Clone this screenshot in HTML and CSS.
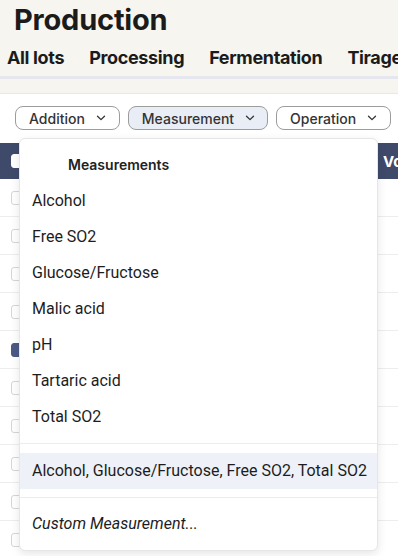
FILE: index.html
```html
<!DOCTYPE html>
<html>
<head>
<meta charset="utf-8">
<link rel="stylesheet" href="styles.css">
</head>
<body>
<div class="page">
  <header class="top">
    <h1 class="title">Production</h1>
    <nav class="tabs">
      <span class="tab">All lots</span>
      <span class="tab">Processing</span>
      <span class="tab">Fermentation</span>
      <span class="tab">Tirage</span>
    </nav>
  </header>
  <div class="rule"></div>
  <section class="card">
    <div class="filters">
      <button class="fbtn">Addition <svg class="chev" viewBox="0 0 10 6" width="10" height="6"><path d="M1.5 1.2 L5 4.6 L8.5 1.2" /></svg></button>
      <button class="fbtn active">Measurement <svg class="chev" viewBox="0 0 10 6" width="10" height="6"><path d="M1.5 1.2 L5 4.6 L8.5 1.2" /></svg></button>
      <button class="fbtn">Operation <svg class="chev" viewBox="0 0 10 6" width="10" height="6"><path d="M1.5 1.2 L5 4.6 L8.5 1.2" /></svg></button>
    </div>
    <div class="table">
      <div class="thead">
        <span class="cb cb-head"></span>
        <span class="th-vol">Volume</span>
      </div>
      <div class="row"><span class="cb"></span></div>
      <div class="row"><span class="cb"></span></div>
      <div class="row"><span class="cb"></span></div>
      <div class="row"><span class="cb"></span></div>
      <div class="row"><span class="cb checked"></span></div>
      <div class="row"><span class="cb"></span></div>
      <div class="row"><span class="cb"></span></div>
      <div class="row"><span class="cb"></span></div>
      <div class="row"><span class="cb"></span></div>
      <div class="row"><span class="cb"></span></div>
    </div>
    <div class="menu">
      <div class="msec">
        <div class="mhead">Measurements</div>
        <div class="mitem">Alcohol</div>
        <div class="mitem">Free SO2</div>
        <div class="mitem">Glucose/Fructose</div>
        <div class="mitem">Malic acid</div>
        <div class="mitem">pH</div>
        <div class="mitem">Tartaric acid</div>
        <div class="mitem">Total SO2</div>
      </div>
      <div class="msec mid">
        <div class="mitem hl">Alcohol, Glucose/Fructose, Free SO2, Total SO2</div>
      </div>
      <div class="msec last">
        <div class="mitem custom">Custom Measurement...</div>
      </div>
    </div>
  </section>
</div>
</body>
</html>
```
FILE: styles.css
```css
* { box-sizing: border-box; }
html, body { margin: 0; padding: 0; }
body {
  background: #f6f5f0;
  font-family: Inter, "Noto Sans", sans-serif;
  color: #1b1b1b;
  width: 398px;
  height: 556px;
  overflow: hidden;
}
.page { position: relative; width: 398px; height: 556px; overflow: hidden; }
.top { padding: 0 0 0 7px; }
.title {
  margin: 0;
  padding: 2px 0 0 7px;
  font-size: 29px;
  line-height: 36px;
  font-weight: 700;
  letter-spacing: -0.2px;
}
.tabs {
  display: flex;
  gap: 25px;
  white-space: nowrap;
  margin-top: 6px;
  height: 28px;
}
.tab {
  font-size: 18px;
  font-weight: 700;
  line-height: 28px;
  letter-spacing: -0.35px;
}
.rule {
  margin-top: 4px;
  height: 3px;
  background: #e6e6ee;
}
.card {
  position: relative;
  margin-top: 14px;
  background: #fff;
  border-top: 1px solid #e8e8e8;
  height: 470px;
}
.filters {
  display: flex;
  gap: 8px;
  padding: 12px 0 0 15px;
}
.fbtn {
  display: flex;
  align-items: center;
  gap: 11px;
  height: 24px;
  padding: 0 13px 0 13px;
  border: 1px solid #9c9c9c;
  border-radius: 8px;
  background: #fff;
  font-family: Inter, "Noto Sans", sans-serif;
  font-size: 14px;
  font-weight: 500;
  color: #333;
  white-space: nowrap;
}
.fbtn.active { background: #e9edf5; padding-right: 12px; }
.chev path { fill: none; stroke: #333; stroke-width: 1.3; stroke-linecap: round; stroke-linejoin: round; }
.table { margin-top: 13px; }
.thead {
  display: flex;
  align-items: center;
  height: 36px;
  background: #3f4a6b;
  padding-left: 11px;
  position: relative;
}
.th-vol {
  position: absolute;
  left: 383px;
  color: #fff;
  font-weight: 700;
  font-size: 15px;
  white-space: nowrap;
}
.row {
  display: flex;
  align-items: center;
  height: 38px;
  border-bottom: 1px solid #ededed;
  padding-left: 11px;
}
.cb {
  display: block;
  width: 14px;
  height: 14px;
  border: 1px solid #d6d6d6;
  border-radius: 3px;
  background: #fff;
}
.cb-head { border-color: #fff; }
.cb.checked { background: #4b5a86; border-color: #4b5a86; }
.menu {
  position: absolute;
  left: 19px;
  top: 44px;
  width: 359px;
  height: 413px;
  background: #fff;
  border: 1px solid #e6e6e6;
  border-radius: 6px;
  box-shadow: 0 3px 10px rgba(0,0,0,0.10);
  padding-top: 8px;
  font-family: Roboto, "Noto Sans", sans-serif;
}
.msec { padding-bottom: 8px; border-bottom: 1px solid #ececec; }
.msec.mid { padding-top: 9px; }
.msec.last { padding-top: 8px; border-bottom: none; }
.mhead {
  height: 36px;
  line-height: 36px;
  padding-left: 48px;
  font-family: Inter, "Noto Sans", sans-serif;
  font-size: 14px;
  font-weight: 600;
  color: #222;
}
.mitem {
  height: 36px;
  line-height: 36px;
  padding-left: 12px;
  font-size: 16px;
  color: #1d1d1d;
  white-space: nowrap;
}
.mitem.hl { background: #eef2f8; }
.mitem.custom { font-style: italic; }
```
